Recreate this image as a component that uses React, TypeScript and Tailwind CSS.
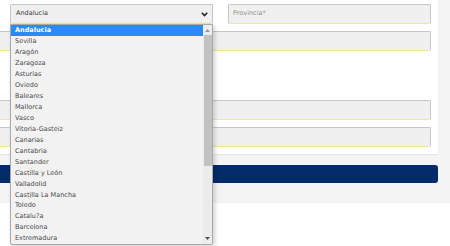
import React from "react";

const items = [
  "Andalucia",
  "Sevilla",
  "Aragón",
  "Zaragoza",
  "Asturias",
  "Oviedo",
  "Baleares",
  "Mallorca",
  "Vasco",
  "Vitoria-Gasteiz",
  "Canarias",
  "Cantabria",
  "Santander",
  "Castilla y León",
  "Valladolid",
  "Castilla La Mancha",
  "Toledo",
  "Catalu?a",
  "Barcelona",
  "Extremadura",
];

function Field({ className = "", children }: { className?: string; children?: React.ReactNode }) {
  return (
    <div
      className={
        "h-[20px] bg-[#f1f0f0] border border-[#c6c6c6] border-b-[#f2e5a6] rounded-[2px] flex items-center " +
        className
      }
    >
      {children}
    </div>
  );
}

export default function App() {
  return (
    <div
      className="relative w-[450px] h-[246px] bg-white overflow-hidden text-[#444]"
      style={{ fontFamily: '"DejaVu Sans", Verdana, sans-serif' }}
    >
      <div className="h-[203px] bg-[#f4f4f4] pr-[12px]">
        <div className="bg-white h-[154px] pt-[4px] pr-[7px] pb-[7px] flex flex-col shadow-[0_1px_1px_rgba(0,0,0,0.06)]">
          <div className="flex gap-[15px] pl-[10px]">
            <Field className="w-[203px] px-[5px] justify-between">
              <span className="text-[6.5px] text-[#3a3a3a]">Andalucia</span>
              <svg width="7" height="5" viewBox="0 0 7 5" className="mr-[-1px]">
                <path d="M0.8 0.8 L3.5 3.6 L6.2 0.8" fill="none" stroke="#222" strokeWidth="1.6" />
              </svg>
            </Field>
            <Field className="flex-1 px-[4px]">
              <span className="text-[6.5px] text-[#8f8f8f]">Provincia*</span>
            </Field>
          </div>
          <Field className="mt-[7px] border-l-0 rounded-l-none" />
          <Field className="mt-[49px] border-l-0 rounded-l-none" />
          <Field className="mt-[7px] border-l-0 rounded-l-none" />
        </div>
        <div className="mt-[11px] h-[18px] bg-[#022b6a] rounded-r-[3px]" />
      </div>

      <div className="absolute left-[10px] top-[24px] w-[203px] h-[221px] bg-[#f3f2f2] border border-[#a9a9a9] rounded-b-[2px] shadow-[2px_2px_5px_rgba(0,0,0,0.18)] flex">
        <div className="flex-1 flex flex-col">
          {items.map((it, i) => (
            <div
              key={it}
              className={
                "h-[11px] flex items-center pl-[4px] text-[6.5px] leading-none " +
                (i === 0 ? "bg-[#2a8af6] text-white font-bold" : "text-[#4a4a4a]")
              }
            >
              {it}
            </div>
          ))}
        </div>
        <div className="w-[9px] bg-[#ececec] flex flex-col items-center">
          <svg width="5" height="3" viewBox="0 0 5 3" className="mt-[4px]">
            <path d="M0 3 L2.5 0 L5 3 Z" fill="#9a9a9a" />
          </svg>
          <div className="mt-[3px] w-[8px] h-[131px] bg-[#c2c2c2]" />
          <div className="flex-1" />
          <svg width="5" height="3" viewBox="0 0 5 3" className="mb-[4px]">
            <path d="M0 0 L5 0 L2.5 3 Z" fill="#505050" />
          </svg>
        </div>
      </div>
    </div>
  );
}
